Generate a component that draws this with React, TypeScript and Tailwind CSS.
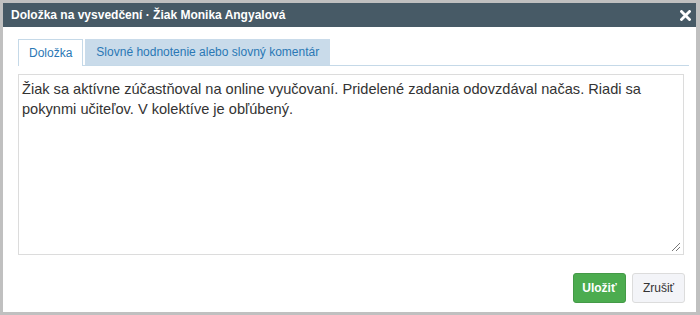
export default function App() {
  return (
    <div className="w-[700px] h-[315px] bg-[#c0c0c0] pt-[3px] pl-[3px] pr-[4px] pb-[3px]" style={{ fontFamily: '"Liberation Sans", Arial, sans-serif' }}>
      <div className="bg-white h-full flex flex-col">
        <div className="h-[24px] bg-[#475a66] flex items-center justify-between pl-[8px] pr-[5px]">
          <span className="text-white font-bold text-[12px]">Doložka na vysvedčení · Žiak Monika Angyalová</span>
          <svg width="11" height="11" viewBox="0 0 11 11" className="mt-[1px]">
            <path d="M1.5 1.5 L9.5 9.5 M9.5 1.5 L1.5 9.5" stroke="white" strokeWidth="2.8" strokeLinecap="square" />
          </svg>
        </div>
        <div className="pl-[15px] pr-[7px] pt-[12px] flex flex-col flex-1">
          <div className="flex items-end h-[27px] border-b border-[#c5d9e8]">
            <div className="h-[27px] px-[10px] border border-b-0 border-[#c5d9e8] bg-white flex items-center text-[12px] text-[#2a78b5] -mb-px pb-px">Doložka</div>
            <div className="h-[26px] ml-[2px] px-[11px] bg-[#c9dbea] flex items-center text-[12px] text-[#2a78b5]">Slovné hodnotenie alebo slovný komentár</div>
          </div>
          <div className="mt-[8px] h-[181px] border border-[#dcdcdc] pl-[3px] pr-[4px] pt-[4px] relative mr-[5px]">
            <p className="text-[14.6px] leading-[20px] text-[#333]">Žiak sa aktívne zúčastňoval na online vyučovaní. Pridelené zadania odovzdával načas. Riadi sa pokynmi učiteľov. V kolektíve je obľúbený.</p>
            <svg width="10" height="10" viewBox="0 0 10 10" className="absolute right-[2px] bottom-[2px]">
              <path d="M1 9 L9 1 M5 9 L9 5" stroke="#777" strokeWidth="1" />
            </svg>
          </div>
          <div className="flex justify-end gap-[6px] mt-[18px] mr-[4px]">
            <button className="h-[30px] w-[53px] rounded-[3px] bg-[#4cac4f] border border-[#449a47] text-white font-bold text-[12px]">Uložiť</button>
            <button className="h-[30px] w-[53px] rounded-[3px] bg-[#f3f4f8] border border-[#dcdcdc] text-[#333] text-[12px]">Zrušiť</button>
          </div>
        </div>
      </div>
    </div>
  );
}
